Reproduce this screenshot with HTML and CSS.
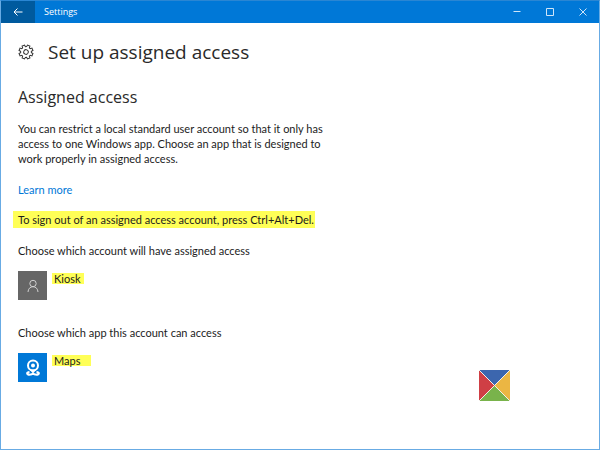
FILE: index.html
```html
<!DOCTYPE html>
<html lang="en">
<head>
<meta charset="utf-8">
<meta name="viewport" content="width=device-width, initial-scale=1">
<title>Settings</title>
<link rel="stylesheet" href="styles.css">
</head>
<body>
<div class="window">
  <header class="titlebar">
    <button class="back" type="button" aria-label="Back">
      <svg width="10" height="10" viewBox="0 0 10 10"><path d="M9.5 5H1M4.5 1.5L1 5l3.500 3.500"/></svg>
    </button>
    <span class="caption">Settings</span>
    <button class="control" type="button" aria-label="Minimize">
      <svg width="8" height="8" viewBox="0 0 8 8"><path d="M0.500 3.500h7"/></svg>
    </button>
    <button class="control" type="button" aria-label="Maximize">
      <svg width="8" height="8" viewBox="0 0 8 8"><path d="M0.500 0.500h7v7h-7z"/></svg>
    </button>
    <button class="control" type="button" aria-label="Close">
      <svg width="8" height="8" viewBox="0 0 8 8"><path d="M0.500 0.500l7 7M7.500 0.500l-7 7"/></svg>
    </button>
  </header>
  <main class="content">
    <div class="page-head">
      <svg class="gear" width="16" height="16" viewBox="0 0 16 16">
        <g transform="translate(8 8) rotate(22.5)">
          <path d="M-1.500-5.200L-1.300-7H1.300L1.500-5.200L2.600-4.700L4-5.900L5.900-4L4.700-2.600L5.200-1.500L7-1.300V1.300L5.200 1.500L4.700 2.600L5.900 4L4 5.900L2.600 4.700L1.500 5.200L1.300 7H-1.300L-1.500 5.200L-2.600 4.700L-4 5.900L-5.900 4L-4.700 2.600L-5.200 1.500L-7 1.300V-1.300L-5.200-1.500L-4.700-2.600L-5.900-4L-4-5.900L-2.600-4.700Z"/>
          <circle r="2.300"/>
        </g>
      </svg>
      <h1>Set up assigned access</h1>
    </div>
    <h2>Assigned access</h2>
    <p class="intro">You can restrict a local standard user account so that it only has access to one Windows app. Choose an app that is designed to work properly in assigned access.</p>
    <a class="more" href="#">Learn more</a>
    <p class="notice"><mark>To sign out of an assigned access account, press Ctrl+Alt+Del.</mark></p>
    <section class="choice">
      <h3>Choose which account will have assigned access</h3>
      <button class="pick" type="button">
        <span class="tile account">
          <svg width="14" height="14" viewBox="0 0 14 14"><circle cx="7" cy="4.500" r="3.200"/><path d="M2 13c.2-3.300 2.200-5.300 5-5.300s4.800 2 5 5.300"/></svg>
        </span>
        <mark>Kiosk</mark>
      </button>
    </section>
    <section class="choice">
      <h3>Choose which app this account can access</h3>
      <button class="pick" type="button">
        <span class="tile app">
          <svg width="16" height="18" viewBox="0 0 16 18"><circle cx="8" cy="6.500" r="5"/><circle class="dot" cx="8" cy="6.500" r="2"/><path class="tip" d="M4.500 10.500h7L8 14.500z"/><path class="base" d="M4.500 13C1 13.500 1.500 15.500 5 15.800M11.500 13C15 13.500 14.500 15.500 11 15.800M5 15.800L8 14.800l3 1"/></svg>
        </span>
        <mark class="wide">Maps</mark>
      </button>
    </section>
  </main>
  <svg class="badge" width="31" height="31" viewBox="0 0 31 31" role="img" aria-label="Site logo">
    <path fill="#3c66ae" d="M0 0h31L15.500 15.500z"/>
    <path fill="#ebb643" d="M31 0v31L15.500 15.500z"/>
    <path fill="#79b34b" d="M31 31H0l15.500-15.500z"/>
    <path fill="#cf3f45" d="M0 31V0l15.500 15.500z"/>
    <path stroke="#f3eee8" d="M0 0l31 31M31 0L0 31"/>
  </svg>
</div>
</body>
</html>
```
FILE: styles.css
```css
* {
  box-sizing: border-box;
}

body {
  margin: 0;
  font: 11px/15px Lato, "Open Sans", sans-serif;
  color: #1c1c1c;
  background: #fff;
}

h1, h2, h3, p {
  margin: 0;
  font-weight: 400;
}

button {
  padding: 0;
  border: 0;
  background: none;
  font: inherit;
  color: inherit;
}

svg {
  display: block;
  fill: none;
  stroke: currentColor;
}

.window {
  position: relative;
  min-height: 100vh;
  border: 1px solid #68abe4;
  border-top-color: #2a86d3;
}

.titlebar {
  display: flex;
  height: 22px;
  background: #0078d7;
  color: #fff;
}

.back {
  display: grid;
  place-items: center;
  width: 34px;
  background: #005a9e;
}

.caption {
  flex: 1;
  padding-left: 9px;
  font-family: "Open Sans", sans-serif;
  font-size: 9px;
  line-height: 22px;
}

.control {
  display: grid;
  place-items: center;
  width: 33px;
  color: #cfe5f8;
}

.content {
  padding: 15px 17px;
}

.page-head {
  display: flex;
  align-items: center;
  gap: 14px;
}

.gear {
  color: #333;
}

h1, h2 {
  font-family: "Open Sans", sans-serif;
  color: #2a2a2a;
}

h1 {
  font-size: 19px;
  line-height: 28px;
}

h2 {
  margin-top: 20px;
  font-size: 16px;
  line-height: 22px;
}

.intro {
  max-width: 310px;
  margin-top: 13px;
}

.more {
  display: inline-block;
  margin-top: 16px;
  color: #0078d7;
  text-decoration: none;
}

mark {
  background: #ffff57;
  color: inherit;
}

.notice {
  margin: 14px 0 0 -5px;
}

.notice mark {
  display: block;
  width: fit-content;
  padding: 1px 1px 1px 5px;
}

.choice {
  margin-top: 15px;
}

.choice + .choice {
  margin-top: 25px;
}

h3 {
  font-size: 11px;
  line-height: 15px;
}

.pick {
  display: flex;
  align-items: flex-start;
  gap: 5px;
  margin-top: 13px;
}

.pick mark {
  margin-top: 2px;
  padding: 0 3px 0 2px;
  line-height: 11px;
}

.pick .wide {
  padding-right: 11px;
}

.tile {
  display: grid;
  place-items: center;
  width: 29px;
  height: 29px;
}

.account {
  background: #666;
  color: #d0d0d0;
}

.app {
  background: #0078d7;
  color: #fff;
}

.app svg {
  stroke-width: 2;
}

.dot, .tip {
  fill: currentColor;
  stroke: none;
}

.badge {
  position: absolute;
  right: 89px;
  bottom: 48px;
  stroke: none;
}
```
